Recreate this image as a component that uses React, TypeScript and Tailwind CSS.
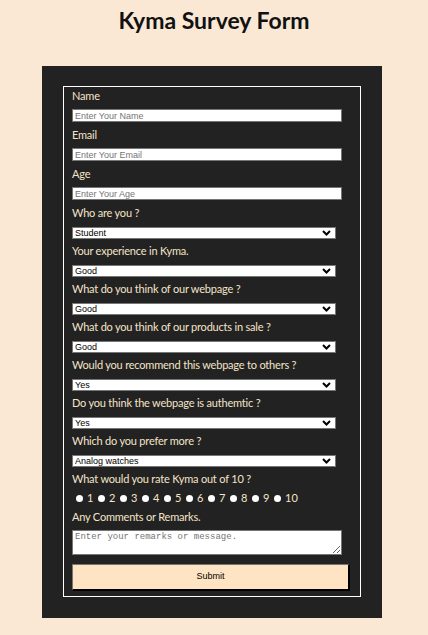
import React from "react";

const labelCls =
  "block text-[11px] leading-[16px] text-[#f5e4c8] font-['Lato',sans-serif] tracking-[-0.2px]";

function TextField({ label, placeholder }: { label: string; placeholder: string }) {
  return (
    <div className="mb-[5px]">
      <label className={labelCls}>{label}</label>
      <input
        type="text"
        placeholder={placeholder}
        className="mt-[5px] block w-[270px] h-[13px] bg-white border border-[#767676] px-[2px] text-[9px] leading-[11px] font-['Liberation_Sans',Arial,sans-serif] text-black placeholder:text-[#757575] outline-none"
      />
    </div>
  );
}

function SelectField({ label, options }: { label: string; options: string[] }) {
  return (
    <div className="mb-[4px]">
      <label className={labelCls}>{label}</label>
      <div className="relative mt-[6px] w-[264px] h-[12px]">
        <select className="appearance-none block w-full h-full bg-white border border-[#767676] pl-[2px] text-[9px] leading-[10px] font-['Liberation_Sans',Arial,sans-serif] text-black outline-none">
          {options.map((o) => (
            <option key={o}>{o}</option>
          ))}
        </select>
        <svg
          className="absolute right-[5px] top-[3px] pointer-events-none"
          width="9"
          height="6"
          viewBox="0 0 9 6"
        >
          <path d="M1 1 L4.5 4.5 L8 1" fill="none" stroke="#000" strokeWidth="2" />
        </svg>
      </div>
    </div>
  );
}

export default function App() {
  const ratings = ["1", "2", "3", "4", "5", "6", "7", "8", "9", "10"];
  return (
    <div className="min-h-[635px] bg-[#fae8d5] pt-[6px] pb-[17px]">
      <h1 className="text-center text-[23px] leading-[28px] font-bold text-[#111] font-['Lato',sans-serif]">
        Kyma Survey Form
      </h1>
      <div className="ml-[42px] mt-[32px] w-[340px] bg-[#222222] p-[20px] pl-[21px] pr-[21px] pb-[21px]">
        <form className="border border-white pl-[8px] pr-[9px] pt-[1px] pb-[5px]">
          <TextField label="Name" placeholder="Enter Your Name" />
          <TextField label="Email" placeholder="Enter Your Email" />
          <TextField label="Age" placeholder="Enter Your Age" />
          <SelectField label="Who are you ?" options={["Student", "Professional", "Other"]} />
          <SelectField label="Your experience in Kyma." options={["Good", "Average", "Bad"]} />
          <SelectField label="What do you think of our webpage ?" options={["Good", "Average", "Bad"]} />
          <SelectField
            label="What do you think of our products in sale ?"
            options={["Good", "Average", "Bad"]}
          />
          <SelectField label="Would you recommend this webpage to others ?" options={["Yes", "No"]} />
          <SelectField label="Do you think the webpage is authemtic ?" options={["Yes", "No"]} />
          <SelectField
            label="Which do you prefer more ?"
            options={["Analog watches", "Digital watches", "Smart watches"]}
          />
          <div className="mt-[2px]">
            <label className={labelCls}>What would you rate Kyma out of 10 ?</label>
            <div className="mt-[4px] mb-[4px] flex h-[14px] items-center pl-[4px]">
              {ratings.map((r) => (
                <label key={r} className="flex items-center w-[22px] shrink-0">
                  <input
                    type="radio"
                    name="rate"
                    value={r}
                    className="appearance-none w-[7px] h-[7px] rounded-full bg-white m-0 shrink-0"
                  />
                  <span className="ml-[4px] text-[11px] leading-[14px] text-[#f5e4c8] font-['Lato',sans-serif]">
                    {r}
                  </span>
                </label>
              ))}
            </div>
          </div>
          <div>
            <label className={labelCls}>Any Comments or Remarks.</label>
            <textarea
              placeholder="Enter your remarks or message."
              className="mt-[5px] block w-[270px] h-[25px] bg-white border border-[#767676] px-[2px] py-[1px] text-[9px] leading-[11px] font-['Liberation_Mono',monospace] text-black placeholder:text-[#757575] outline-none"
            />
          </div>
          <button
            type="button"
            className="mt-[9px] block w-[278px] h-[27px] bg-[#ffe4c4] border-t border-l border-t-[#767676] border-l-[#767676] border-r-2 border-b-2 border-r-black border-b-black text-[9px] text-black font-['Liberation_Sans',Arial,sans-serif]"
          >
            Submit
          </button>
        </form>
      </div>
    </div>
  );
}
